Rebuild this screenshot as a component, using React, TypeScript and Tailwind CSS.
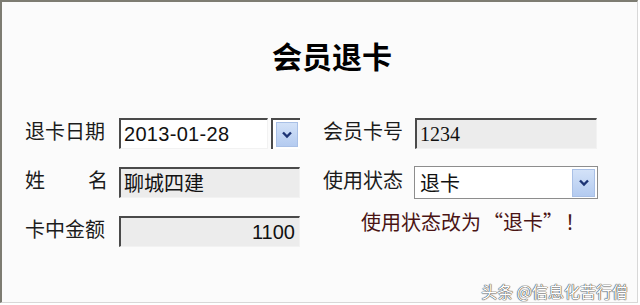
import React from "react"

const cjk = "font-['Noto_Sans_CJK_SC','Noto_Sans',sans-serif]"

function Chevron() {
  return (
    <svg width="12" height="8" viewBox="0 0 12 8">
      <path
        d="M2 1.5 L6 5.5 L10 1.5"
        fill="none"
        stroke="#1d3474"
        strokeWidth="2.4"
      />
    </svg>
  )
}

function BlueButton({ className = "" }: { className?: string }) {
  return (
    <div
      className={`flex items-center justify-center border border-[#a9c0e6] bg-gradient-to-b from-[#d3e2f8] to-[#b4cbf0] ${className}`}
    >
      <Chevron />
    </div>
  )
}

function Label({ children }: { children: React.ReactNode }) {
  return (
    <div className={`${cjk} text-[20px] leading-none text-[#1c1c1c] pb-[5px]`}>
      {children}
    </div>
  )
}

export default function App() {
  const inputBase =
    "h-[31px] flex items-center border-t-2 border-l-2 border-r border-b border-t-[#4a4a4a] border-l-[#4a4a4a] border-r-[#f2f2f2] border-b-[#f2f2f2] text-[20px] leading-none text-[#111]"

  return (
    <div className="w-[640px] h-[305px] bg-white relative overflow-hidden">
      <div className="w-[638px] h-[303px] bg-[#fbfbfb] border-t-2 border-l-2 border-r border-b border-t-[#7d7c72] border-l-[#7d7c72] border-r-[#d8d8d8] border-b-[#d8d8d8]">
        {/* 标题 */}
        <div className="pt-[33px] h-[107px] flex justify-center pl-[25px]">
          <h1 className={`${cjk} text-[30px] leading-[40px] font-bold text-black`}>
            会员退卡
          </h1>
        </div>

        <div className="grid grid-cols-[298px_1fr] pl-[23px]">
          {/* 退卡日期 */}
          <div className="h-[49px] flex items-center">
            <div className="w-[94px]">
              <Label>退卡日期</Label>
            </div>
            <div className={`${inputBase} w-[149px] bg-white pl-[3px] font-['Liberation_Sans',sans-serif] tracking-[0.3px]`}>
              2013-01-28
            </div>
            <div className="ml-[3px] w-[29px] h-[31px] border-t-2 border-l-2 border-t-[#4a4a4a] border-l-[#4a4a4a] bg-white flex items-center justify-center">
              <BlueButton className="w-[22px] h-[25px]" />
            </div>
          </div>

          {/* 会员卡号 */}
          <div className="h-[49px] flex items-center">
            <div className="w-[92px]">
              <Label>会员卡号</Label>
            </div>
            <div className={`${inputBase} w-[182px] bg-[#ececec] pl-[3px] font-['Liberation_Serif',serif]`}>
              1234
            </div>
          </div>

          {/* 姓名 */}
          <div className="h-[49px] flex items-center">
            <div className="w-[94px]">
              <div className="w-[83px] flex justify-between">
                <Label>姓</Label>
                <Label>名</Label>
              </div>
            </div>
            <div className={`${inputBase} w-[181px] bg-[#ececec] pl-[3px] ${cjk}`}>
              聊城四建
            </div>
          </div>

          {/* 使用状态 */}
          <div className="h-[49px] flex items-center">
            <div className="w-[91px]">
              <Label>使用状态</Label>
            </div>
            <div className="h-[33px] w-[184px] flex items-center justify-between border border-[#8d8d8d] bg-white pl-[5px] pr-[2px]">
              <span className={`${cjk} text-[20px] leading-none text-[#111]`}>退卡</span>
              <BlueButton className="w-[23px] h-[28px]" />
            </div>
          </div>

          {/* 卡中金额 */}
          <div className="h-[49px] flex items-center">
            <div className="w-[94px]">
              <Label>卡中金额</Label>
            </div>
            <div className={`${inputBase} w-[181px] bg-[#ececec] justify-end pr-[4px] font-['Liberation_Sans',sans-serif]`}>
              1100
            </div>
          </div>

          {/* 提示 */}
          <div className="h-[49px] flex items-start pl-[38px] pt-[5px]">
            <span className={`${cjk} text-[20px] leading-none text-[#4a1414] whitespace-nowrap`}>
              使用状态改为
              <span className="inline-block w-[22px] text-right">“</span>
              退卡
              <span className="inline-block w-[22px] text-left">”</span>
              <span className="inline-block w-[20px] text-center">！</span>
            </span>
          </div>
        </div>
      </div>

      <div
        className={`${cjk} absolute right-[12px] bottom-[6px] text-[16px] leading-none text-white [text-shadow:0_0_1px_#444,0_0_1px_#444,0_0_1px_#444]`}
      >
        头条 @信息化苦行僧
      </div>
    </div>
  )
}
